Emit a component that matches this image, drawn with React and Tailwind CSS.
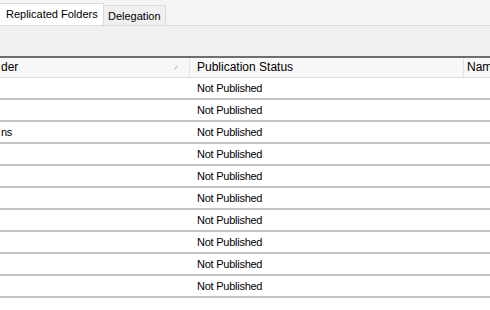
export default function App() {
  const rows = ["", "", "ns", "", "", "", "", "", "", ""];

  return (
    <div
      className="w-[490px] h-[310px] bg-white overflow-hidden text-black"
      style={{ fontFamily: '"Liberation Sans", Arial, sans-serif' }}
    >
      {/* tab strip */}
      <div className="h-[26px] bg-[#f4f4f4] border-b border-[#dcdcdc] flex items-end">
        <div className="w-[104px] shrink-0 h-[22px] bg-white border-r border-t border-[#d9d9d9] pl-[6px] pt-[3px] text-[11px] leading-[14px]">
          Replicated Folders
        </div>
        <div className="w-[62px] shrink-0 h-[20px] bg-[#f0f0f0] border-r border-t border-[#d9d9d9] pl-[4px] pt-[3px] text-[11px] leading-[14px]">
          Delegation
        </div>
      </div>

      {/* toolbar area */}
      <div className="h-[30px] bg-[#f0f0f0]" />
      <div className="h-[2px] bg-[#6e6e6e]" />

      {/* column headers */}
      <div className="h-[20px] bg-[#f8f8f8] border-b border-[#d6e0e9] flex text-[12px] leading-[19px] overflow-hidden">
        <div className="w-[189px] shrink-0 pl-[1px] relative">
          der
          <svg className="absolute left-[174px] top-[7px]" width="4" height="5" viewBox="0 0 4 5">
            <path d="M0.5 4.5 L3.5 0.5" stroke="#9a9a9a" strokeWidth="0.8" />
          </svg>
        </div>
        <div className="w-[274px] shrink-0 border-l border-[#e3e3e3] pl-[7px]">Publication Status</div>
        <div className="w-[60px] shrink-0 border-l border-[#e3e3e3] pl-[3px] whitespace-nowrap">Name</div>
      </div>

      {/* rows */}
      {rows.map((name, i) => (
        <div
          key={i}
          className="h-[22px] border-b-2 border-[#c2c2c2] flex items-center text-[11px] tracking-[-0.25px]"
        >
          <div className="w-[189px] shrink-0 pl-[1px]">{name}</div>
          <div className="w-[274px] shrink-0 pl-[8px]">Not Published</div>
          <div className="flex-1" />
        </div>
      ))}
    </div>
  );
}
